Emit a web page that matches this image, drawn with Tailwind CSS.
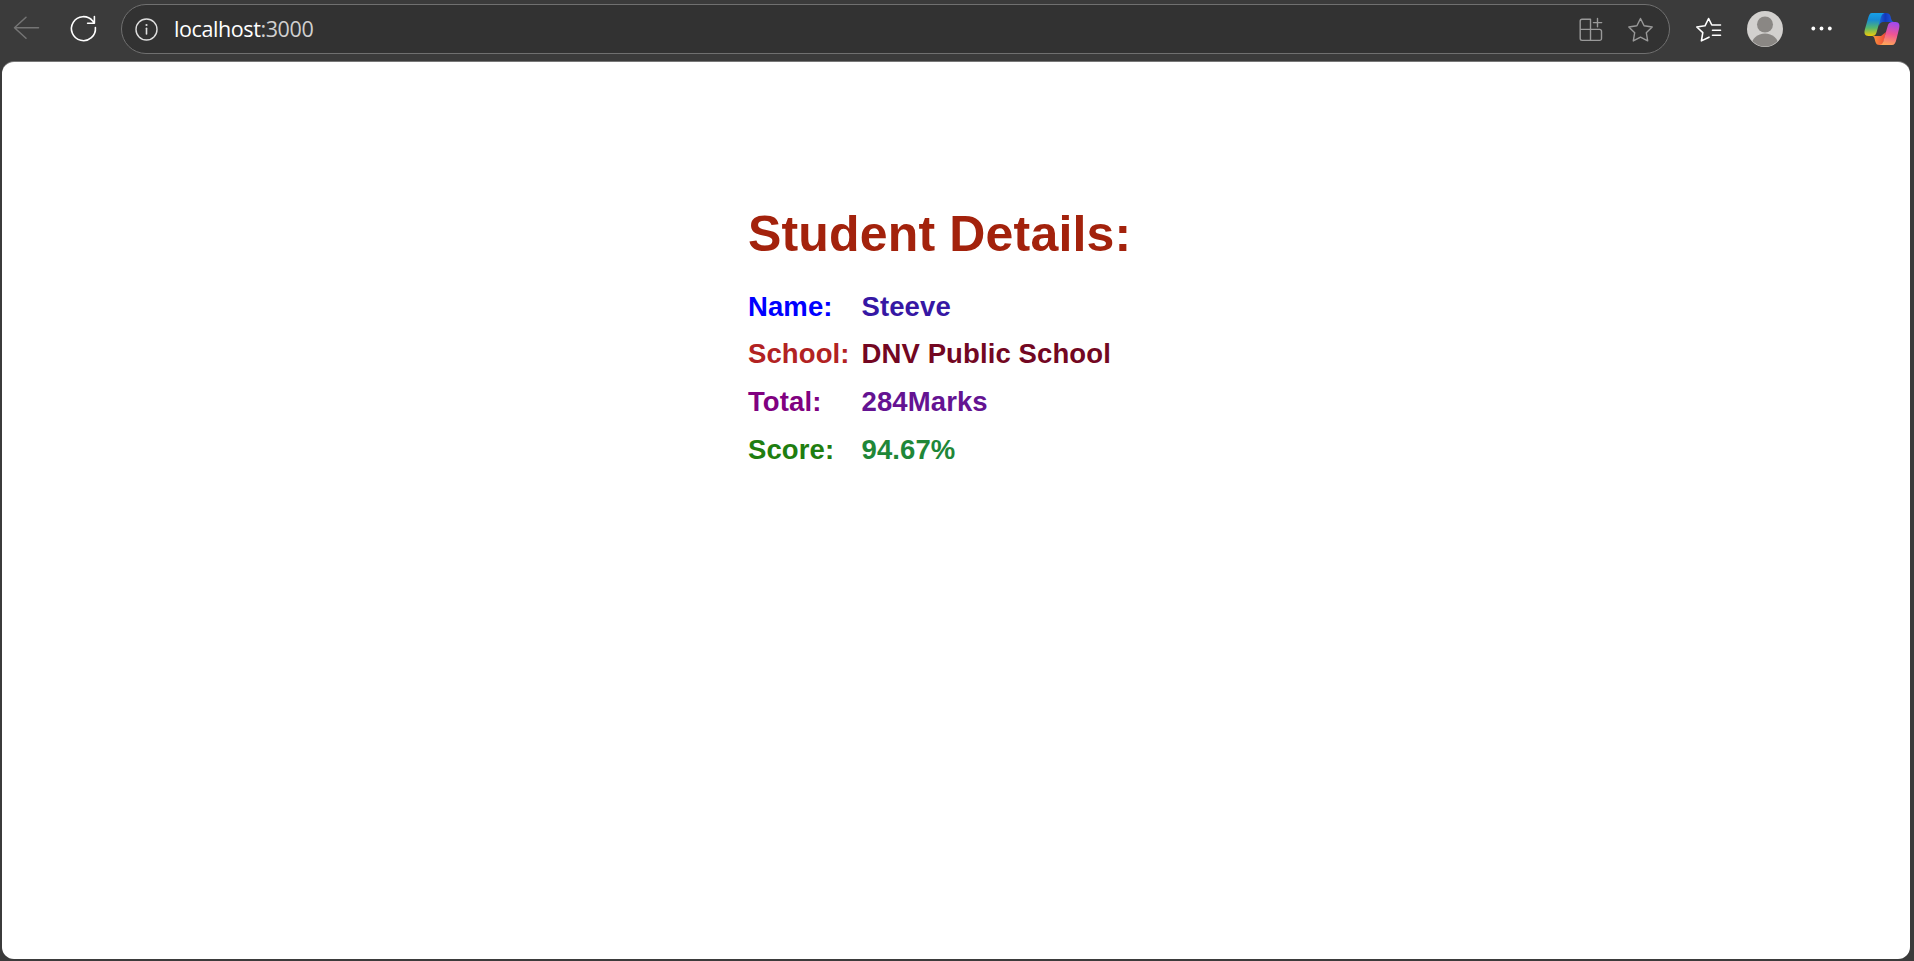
<!DOCTYPE html>
<html lang="en">
<head>
<meta charset="utf-8">
<title>Student Details</title>
<script src="https://cdn.jsdelivr.net/npm/@tailwindcss/browser@4"></script>
</head>
<body class="h-[961px] w-[1914px] overflow-hidden bg-[#3b3b3b] flex flex-col">
<header class="h-[62px] shrink-0 flex items-start text-white">
  <svg class="w-[60px] h-[62px] shrink-0" viewBox="0 0 60 62" fill="none" stroke="#757575" stroke-width="1.5" stroke-linecap="round" stroke-linejoin="round"><path d="M38.5 27.7H14.5M26 17.2L14.5 27.7L26 38.3"/></svg>
  <svg class="w-[61px] h-[62px] shrink-0" viewBox="60 0 61 62" fill="none" stroke="#fff" stroke-width="1.6" stroke-linecap="round" stroke-linejoin="round"><path d="M95.4 27.5A12 12 0 1 1 92.7 21L94.3 23M94.4 16.5V23.2H87.6"/></svg>
  <div class="mt-1 h-[50px] w-[1549px] shrink-0 rounded-full border border-[#707070] bg-[#323232] flex items-center">
    <svg class="ml-3 size-[25px] shrink-0" viewBox="134 17 25 25" fill="none" stroke="#dedede" stroke-width="1.4"><circle cx="146.5" cy="29.5" r="10.5"/><path d="M146.5 28.2V34" stroke-width="1.6" stroke-linecap="round"/><circle cx="146.5" cy="25" r="1.1" fill="#dedede" stroke="none"/></svg>
    <div class="ml-[15px] whitespace-nowrap font-['Open_Sans',sans-serif] text-[21.5px] leading-[30px] tracking-[-0.4px]">localhost<span class="text-[#d0d0d0]">:3000</span></div>
    <svg class="ml-auto mr-4 h-[30px] w-[80px] shrink-0" viewBox="1573 14 80 30" fill="none" stroke="#999" stroke-width="1.4" stroke-linecap="round" stroke-linejoin="round">
      <path d="M1590.5 19.2H1582a1.8 1.8 0 0 0-1.8 1.8V38.6a1.8 1.8 0 0 0 1.8 1.8H1599.7a1.8 1.8 0 0 0 1.8-1.8V31.2a1.8 1.8 0 0 0-1.8-1.8H1580.2M1590.5 19.2V40.4M1597.5 18.5V26.7M1593.4 22.6H1601.7"/>
      <path d="M1640.5 18.5L1644.1 25.8L1652.2 27L1646.3 32.7L1647.7 40.9L1640.5 37.1L1633.3 40.9L1634.7 32.7L1628.8 27L1636.9 25.8Z"/>
    </svg>
  </div>
  <svg class="w-[70px] h-[62px] shrink-0" viewBox="1670 0 70 62" fill="none" stroke="#fff" stroke-width="1.6" stroke-linecap="round" stroke-linejoin="round"><path d="M1709 37.2L1701.4 40.9L1702.8 32.7L1696.8 27L1705 25.8L1708.6 18.5L1711.8 25H1720.5M1712.5 30.3H1720.5M1712.5 35.3H1720.5"/></svg>
  <svg class="w-[55px] h-[62px] shrink-0" viewBox="1740 0 55 62"><defs><clipPath id="avatar"><circle cx="1765" cy="29" r="17.5"/></clipPath></defs><circle cx="1765" cy="29" r="18" fill="#d2d0ce"/><g clip-path="url(#avatar)" fill="#8a8784"><circle cx="1765" cy="24.5" r="8"/><ellipse cx="1765" cy="45.5" rx="13.5" ry="12"/></g></svg>
  <svg class="w-[55px] h-[62px] shrink-0" viewBox="1795 0 55 62" fill="#fff"><circle cx="1813.3" cy="28.5" r="1.9"/><circle cx="1821.5" cy="28.5" r="1.9"/><circle cx="1829.8" cy="28.5" r="1.9"/></svg>
  <svg class="w-[64px] h-[62px] shrink-0" viewBox="1850 0 64 62">
    <defs>
      <linearGradient id="left" x1="0" y1="0" x2="0" y2="1"><stop offset="0" stop-color="#16a0e8"/><stop offset=".3" stop-color="#188bd3"/><stop offset=".65" stop-color="#55b66d"/><stop offset="1" stop-color="#f1cb08"/></linearGradient>
      <linearGradient id="right" x1=".6" y1="0" x2=".4" y2="1"><stop offset="0" stop-color="#a14af0"/><stop offset=".5" stop-color="#ef5494"/><stop offset="1" stop-color="#ffa657"/></linearGradient>
      <linearGradient id="top" x1="0" y1="0" x2="1" y2="0"><stop offset="0" stop-color="#1f83e6"/><stop offset=".5" stop-color="#1238bd"/><stop offset="1" stop-color="#2560e4"/></linearGradient>
      <linearGradient id="bottom" x1="0" y1="0" x2="1" y2="0"><stop offset="0" stop-color="#f8a13c"/><stop offset="1" stop-color="#ef4638"/></linearGradient>
    </defs>
    <path d="M1876 13H1886C1888.5 13 1889.8 14 1890.5 16.2L1891.2 19C1891.8 21 1892.5 22 1894.5 22H1884C1880.8 22 1880 23 1879 26Z" fill="url(#top)"/>
    <path d="M1886 32L1884 40C1882.6 44 1882 45 1880 45H1879.5C1877 45 1876 44 1875.3 41.5L1874.5 38.5C1874 36.6 1873 36 1871 36H1881Z" fill="url(#bottom)"/>
    <path d="M1872 13H1885.5C1882.5 13 1881.5 15.5 1880.7 18L1876.5 32.5C1875.8 35 1874.5 36 1872 36H1868.5C1864.5 36 1863.8 33 1865 29L1868 18.5C1869 15 1869.8 13 1872 13Z" fill="url(#left)"/>
    <path d="M1892 45H1878.5C1882 45 1883 42.8 1883.7 40L1887.7 26C1888.5 23 1890 22 1892.5 22H1895.5C1899.5 22 1900 25 1899 29L1896.5 39C1895.5 43 1894.5 45 1892 45Z" fill="url(#right)"/>
  </svg>
</header>
<main class="ml-[2px] h-[897px] w-[1908px] rounded-[12px] bg-white pl-[746px] pt-[143px] font-['Liberation_Sans',Arial,sans-serif] font-bold shadow-[0_-1px_0_#777]">
  <h1 class="text-[50px] leading-[58px] tracking-[0.17px] text-[#a3220c]">Student Details:</h1>
  <dl class="mt-[20px] grid grid-cols-[113.5px_1fr] auto-rows-[47.6px] items-center text-[27.5px] leading-[32px] tracking-[0.11px]">
    <dt class="text-[#0000ff]">Name:</dt><dd class="text-[#3617a4]">Steeve</dd>
    <dt class="text-[#b22222]">School:</dt><dd class="text-[#730722]">DNV Public School</dd>
    <dt class="text-[#800080]">Total:</dt><dd class="text-[#641392]">284Marks</dd>
    <dt class="text-[#1f7e10]">Score:</dt><dd class="text-[#1f8738]">94.67%</dd>
  </dl>
</main>
</body>
</html>
